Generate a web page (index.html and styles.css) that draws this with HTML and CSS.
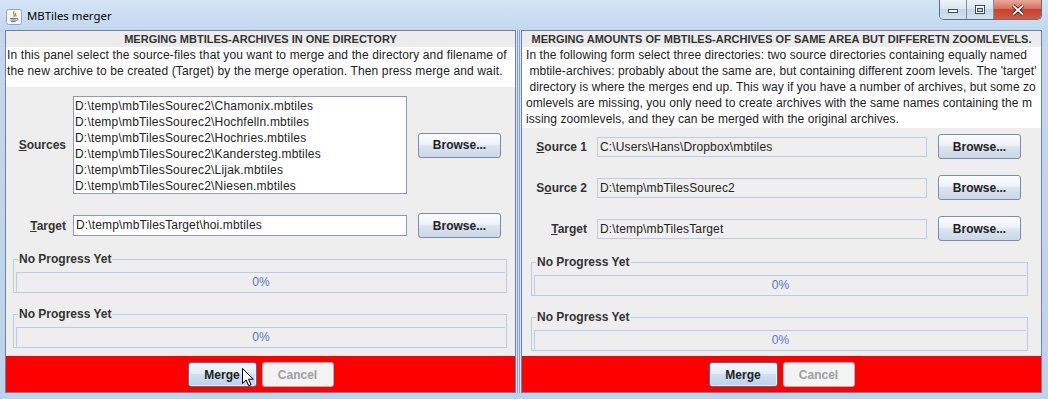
FILE: index.html
```html
<!DOCTYPE html>
<html lang="en">
  <head>
    <meta charset="UTF-8" />
    <title>MBTiles merger</title>
    <link rel="stylesheet" href="styles.css">
  </head>
  <body>
    <div class="window">
      <div class="titlebar">
        <span class="app-icon">
          <svg width="16" height="16" viewBox="0 0 16 16">
            <rect x="0.5" y="0.5" width="15" height="15" rx="2" fill="#f3f5f7" stroke="#9aa3ad"/>
            <path d="M8.2 2.2c-2.2 1.8 1.6 3 -0.4 5.6M9.8 4.2c-1.2 1 1 1.6 -0.2 3.2" stroke="#e76f00" stroke-width="1.2" fill="none"/>
            <path d="M4 9.5h6.5M4.5 11h5.5M5 12.5h4.5" stroke="#4f7ea3" stroke-width="1"/>
            <path d="M10.5 9.3c2 0 2 2.2 -0.3 2.2" stroke="#4f7ea3" stroke-width="1" fill="none"/>
          </svg>
        </span>
        <span class="title">MBTiles merger</span>
        <div class="caption">
          <span class="cap cap-min">
            <svg width="12" height="8" viewBox="0 0 12 8"><rect x="1.5" y="3.5" width="9" height="3" fill="#fff" stroke="#3b4a5e"/></svg>
          </span>
          <span class="cap cap-max">
            <svg width="12" height="10" viewBox="0 0 12 10"><rect x="1.5" y="0.5" width="9" height="8" fill="none" stroke="#3b4a5e"/><rect x="2.5" y="1.5" width="7" height="6" fill="none" stroke="#fff"/><rect x="3.5" y="3.5" width="5" height="3" fill="none" stroke="#3b4a5e"/></svg>
          </span>
          <span class="cap cap-close">
            <svg width="14" height="12" viewBox="0 0 14 12"><path d="M2 1.5l10 9M12 1.5l-10 9" stroke="#3a1a14" stroke-width="3.6"/><path d="M2 1.5l10 9M12 1.5l-10 9" stroke="#fff" stroke-width="1.8"/></svg>
          </span>
        </div>
      </div>

      <div class="client">
        <section class="panel panel-left">
          <h2 class="panel-head">MERGING MBTILES-ARCHIVES IN ONE DIRECTORY</h2>
          <div class="panel-desc desc-left">
            <div>In this panel select the source-files that you want to merge and the directory and filename of</div>
            <div>the new archive to be created (Target) by the merge operation. Then press merge and wait.</div>
          </div>
          <div class="panel-body">
            <div class="form form-left">
              <label class="lbl"><u>S</u>ources</label>
              <div class="list">
                <div>D:\temp\mbTilesSourec2\Chamonix.mbtiles</div>
                <div>D:\temp\mbTilesSourec2\Hochfelln.mbtiles</div>
                <div>D:\temp\mbTilesSourec2\Hochries.mbtiles</div>
                <div>D:\temp\mbTilesSourec2\Kandersteg.mbtiles</div>
                <div>D:\temp\mbTilesSourec2\Lijak.mbtiles</div>
                <div>D:\temp\mbTilesSourec2\Niesen.mbtiles</div>
              </div>
              <button class="btn">Browse...</button>

              <label class="lbl"><u>T</u>arget</label>
              <div class="field field-edit">D:\temp\mbTilesTarget\hoi.mbtiles</div>
              <button class="btn">Browse...</button>
            </div>

            <fieldset class="group group-left">
              <legend>No Progress Yet</legend>
              <div class="bar">0%</div>
            </fieldset>
            <fieldset class="group group-left">
              <legend>No Progress Yet</legend>
              <div class="bar">0%</div>
            </fieldset>
          </div>
          <div class="actions">
            <button class="btn btn-merge btn-hover">Merge
              <svg class="cursor" width="13" height="20" viewBox="0 0 13 20">
                <path d="M0.5 0.5V15.5L4.2 12L6.7 17.8L9 16.8L6.5 11.2H11.3Z" fill="#fff" stroke="#000" stroke-linejoin="round"/>
              </svg>
            </button>
            <button class="btn btn-cancel" disabled>Cancel</button>
          </div>
        </section>

        <div class="splitter"></div>

        <section class="panel panel-right">
          <h2 class="panel-head">MERGING AMOUNTS OF MBTILES-ARCHIVES OF SAME AREA BUT DIFFERETN ZOOMLEVELS.</h2>
          <div class="panel-desc desc-right">
            <div>In the following form select three directories: two source directories containing equally named</div>
            <div> mbtile-archives: probably about the same are, but containing different zoom levels. The 'target'</div>
            <div> directory is where the merges end up. This way if you have a number of archives, but some zo</div>
            <div>omlevels are missing, you only need to create archives with the same names containing the m</div>
            <div>issing zoomlevels, and they can be merged with the original archives.</div>
          </div>
          <div class="panel-body">
            <div class="form form-right">
              <label class="lbl"><u>S</u>ource 1</label>
              <div class="field field-ro">C:\Users\Hans\Dropbox\mbtiles</div>
              <button class="btn">Browse...</button>

              <label class="lbl">S<u>o</u>urce 2</label>
              <div class="field field-ro">D:\temp\mbTilesSourec2</div>
              <button class="btn">Browse...</button>

              <label class="lbl"><u>T</u>arget</label>
              <div class="field field-ro">D:\temp\mbTilesTarget</div>
              <button class="btn">Browse...</button>
            </div>

            <fieldset class="group group-right">
              <legend>No Progress Yet</legend>
              <div class="bar">0%</div>
            </fieldset>
            <fieldset class="group group-right">
              <legend>No Progress Yet</legend>
              <div class="bar">0%</div>
            </fieldset>
          </div>
          <div class="actions">
            <button class="btn btn-merge">Merge</button>
            <button class="btn btn-cancel" disabled>Cancel</button>
          </div>
        </section>
      </div>
    </div>
  </body>
</html>
```

FILE: styles.css
```css
* {
  box-sizing: border-box;
}

body {
  margin: 0;
  font-family: "Liberation Sans", Arial, sans-serif;
  font-size: 12px;
  color: #222;
  background-color: #c4d8ee;
}

.window {
  width: 1048px;
  height: 399px;
  display: flex;
  flex-direction: column;
  overflow: hidden;
  background: linear-gradient(#d5e4f5, #c3d8ef 30px, #bdd3ec);
}

/* title bar */

.titlebar {
  height: 30px;
  display: flex;
  align-items: flex-start;
  padding: 0 6px 0 6px;
}

.app-icon {
  width: 16px;
  height: 16px;
  margin-top: 9px;
}

.app-icon svg {
  display: block;
}

.title {
  margin: 8px 0 0 5px;
  font-family: "Noto Sans", "Open Sans", sans-serif;
  font-size: 11.4px;
  line-height: 16px;
  color: #000;
}

.caption {
  margin-left: auto;
  display: flex;
  height: 20px;
  border: 1px solid #5b6f8a;
  border-top: none;
  border-radius: 0 0 5px 5px;
  overflow: hidden;
}

.cap {
  display: flex;
  align-items: center;
  justify-content: center;
  height: 19px;
  background: linear-gradient(#eef3f9, #dbe6f2 45%, #c6d6e8 50%, #d3e1f0);
}

.cap-min {
  width: 27px;
  border-right: 1px solid #7d8fa8;
}

.cap-max {
  width: 27px;
  border-right: 1px solid #7d8fa8;
}

.cap-close {
  width: 47px;
  background: linear-gradient(#e9a99a, #d9705b 45%, #c7432b 50%, #d4593d);
}

/* client area */

.client {
  flex: 1;
  display: flex;
  padding: 0 6px 6px 5px;
}

.panel {
  display: flex;
  flex-direction: column;
  border: 1px solid #6f82a6;
  background-color: #eeeeee;
}

.panel-left {
  width: 511px;
}

.panel-right {
  width: 521px;
}

.splitter {
  width: 5px;
  background: linear-gradient(90deg, #d6e3f2 0 1px, #8aa0c8 1px 2px, #d6e3f2 2px 3px, #8aa0c8 3px 4px, #d6e3f2 4px);
}

.panel-head {
  margin: 0;
  height: 16px;
  font-size: 11px;
  font-weight: bold;
  line-height: 17px;
  text-align: center;
  white-space: nowrap;
  color: #333;
  background-color: #ececec;
}

.panel-desc {
  overflow: hidden;
  background-color: #fff;
  line-height: 16px;
  color: #222;
}

.panel-desc div {
  white-space: pre;
}

.desc-left {
  height: 40px;
  padding-left: 1px;
  letter-spacing: 0.13px;
}

.desc-right {
  height: 81px;
  padding-left: 4px;
  letter-spacing: 0.07px;
}

.panel-body {
  flex: 1;
}

/* forms */

.form {
  display: grid;
  align-items: center;
}

.form-left {
  margin-top: 9px;
  grid-template-columns: 60px 334px 87px;
  grid-template-rows: 98px 25px;
  column-gap: 7px;
  row-gap: 19px;
}

.form-left .btn {
  margin-left: 4px;
}

.form-right {
  margin-top: 6px;
  grid-template-columns: 65px 330px 84px;
  grid-template-rows: 25px 25px 25px;
  column-gap: 10px;
  row-gap: 16px;
}

.form-right .btn {
  margin-left: 1px;
}

.lbl {
  font-weight: bold;
  text-align: right;
  color: #333;
}

.list {
  height: 98px;
  padding: 1px 1px;
  background-color: #fff;
  border: 1px solid #8c9bb6;
  line-height: 16px;
  letter-spacing: 0.2px;
  color: #222;
}

.field {
  padding-left: 2px;
  white-space: nowrap;
  letter-spacing: 0.15px;
}

.field-edit {
  height: 21px;
  line-height: 19px;
  background-color: #fff;
  border: 1px solid #8c9bb6;
}

.field-ro {
  height: 20px;
  line-height: 18px;
  background-color: #efefef;
  border: 1px solid #b9cde3;
}

/* buttons */

.btn {
  position: relative;
  height: 25px;
  padding: 0;
  font-family: "Liberation Sans", Arial, sans-serif;
  font-size: 12px;
  font-weight: bold;
  color: #222;
  border: 1px solid #7a8ca9;
  border-radius: 3px;
  background: linear-gradient(#fbfcfe, #eef2f8 45%, #dce5f0 50%, #cbd8e8);
}

.btn-merge {
  width: 69px;
  border-color: #3f6a98;
  box-shadow: inset 0 0 0 1px #e3eefa;
  background: linear-gradient(#f2f7fd, #e2edf8 45%, #cfdff0 50%, #bdd1e8);
}

.btn-hover {
  border-color: #4d6f95;
}

.btn-cancel {
  width: 72px;
  color: #a0a0a0;
  border-color: #adb3ba;
  background: #f3f3f3;
}

.cursor {
  position: absolute;
  left: 53px;
  top: 5px;
}

/* progress groups */

.group {
  margin: 14px 0 0 0;
  padding: 6px 1px 0 2px;
  border: 1px solid #b8cee5;
}

.group-left {
  margin-left: 7px;
  margin-right: 8px;
}

.group-right {
  margin-left: 9px;
  margin-right: 13px;
}

.group legend {
  margin-left: 2px;
  padding: 0 1px;
  font-weight: bold;
  line-height: 14px;
  color: #333;
}

.bar {
  height: 20px;
  border-top: 1px solid #b8cee5;
  border-left: 1px solid #b8cee5;
  line-height: 19px;
  text-align: center;
  color: #5b74c0;
}

.actions {
  height: 36px;
  display: flex;
  justify-content: center;
  gap: 5px;
  padding-top: 6px;
  background-color: #ff0000;
}
```
